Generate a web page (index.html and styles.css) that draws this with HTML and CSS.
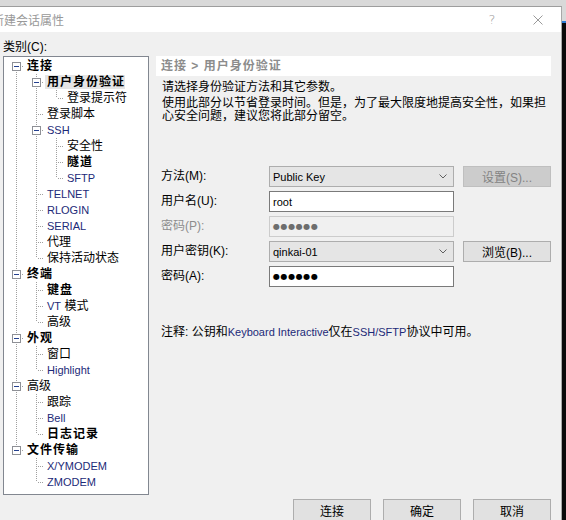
FILE: index.html
```html
<!DOCTYPE html>
<html lang="zh-CN">
<head>
<meta charset="utf-8">
<title>新建会话属性</title>
<link rel="stylesheet" href="styles.css">
</head>
<body>
<div class="screen">
  <div class="topstrip"></div>
  <div class="main">
    <div class="window">
      <div class="titlebar">
        <span class="title">新建会话属性</span>
        <div class="caps">
          <span class="capbtn help">?</span>
          <span class="capbtn">
            <svg width="10" height="10" viewBox="0 0 10 10"><path d="M0.5 0.5L9.5 9.5M9.5 0.5L0.5 9.5" stroke="#9a9a9a" stroke-width="1" fill="none"/></svg>
          </span>
        </div>
      </div>
      <div class="body">
        <div class="cat-label">类别(C):</div>
        <div class="tree">
          <div class="row"><i class="c f"><b class="tg"></b></i><span class="lbl b">连接</span></div>
          <div class="row"><i class="c v"></i><i class="c t"><b class="tg"></b></i><span class="lbl b sel">用户身份验证</span></div>
          <div class="row"><i class="c v"></i><i class="c v"></i><i class="c l"></i><span class="lbl">登录提示符</span></div>
          <div class="row"><i class="c v"></i><i class="c t"></i><span class="lbl">登录脚本</span></div>
          <div class="row"><i class="c v"></i><i class="c t"><b class="tg"></b></i><span class="lbl en">SSH</span></div>
          <div class="row"><i class="c v"></i><i class="c v"></i><i class="c t"></i><span class="lbl">安全性</span></div>
          <div class="row"><i class="c v"></i><i class="c v"></i><i class="c t"></i><span class="lbl b">隧道</span></div>
          <div class="row"><i class="c v"></i><i class="c v"></i><i class="c l"></i><span class="lbl en">SFTP</span></div>
          <div class="row"><i class="c v"></i><i class="c t"></i><span class="lbl en">TELNET</span></div>
          <div class="row"><i class="c v"></i><i class="c t"></i><span class="lbl en">RLOGIN</span></div>
          <div class="row"><i class="c v"></i><i class="c t"></i><span class="lbl en">SERIAL</span></div>
          <div class="row"><i class="c v"></i><i class="c t"></i><span class="lbl">代理</span></div>
          <div class="row"><i class="c v"></i><i class="c l"></i><span class="lbl">保持活动状态</span></div>
          <div class="row"><i class="c t"><b class="tg"></b></i><span class="lbl b">终端</span></div>
          <div class="row"><i class="c v"></i><i class="c t"></i><span class="lbl b">键盘</span></div>
          <div class="row"><i class="c v"></i><i class="c t"></i><span class="lbl"><span class="en">VT</span> 模式</span></div>
          <div class="row"><i class="c v"></i><i class="c l"></i><span class="lbl">高级</span></div>
          <div class="row"><i class="c t"><b class="tg"></b></i><span class="lbl b">外观</span></div>
          <div class="row"><i class="c v"></i><i class="c t"></i><span class="lbl">窗口</span></div>
          <div class="row"><i class="c v"></i><i class="c l"></i><span class="lbl en">Highlight</span></div>
          <div class="row"><i class="c t"><b class="tg"></b></i><span class="lbl">高级</span></div>
          <div class="row"><i class="c v"></i><i class="c t"></i><span class="lbl">跟踪</span></div>
          <div class="row"><i class="c v"></i><i class="c t"></i><span class="lbl en">Bell</span></div>
          <div class="row"><i class="c v"></i><i class="c l"></i><span class="lbl b">日志记录</span></div>
          <div class="row"><i class="c l"><b class="tg"></b></i><span class="lbl b">文件传输</span></div>
          <div class="row"><i class="c n"></i><i class="c t"></i><span class="lbl en">X/YMODEM</span></div>
          <div class="row"><i class="c n"></i><i class="c l"></i><span class="lbl en">ZMODEM</span></div>
        </div>
        <div class="panel">
          <div class="crumb">连接 &gt; 用户身份验证</div>
          <div class="intro">请选择身份验证方法和其它参数。</div>
          <div class="intro2">使用此部分以节省登录时间。但是，为了最大限度地提高安全性，如果担<br>心安全问题，建议您将此部分留空。</div>
          <div class="form">
            <div class="flabel">方法(M):</div>
            <div class="field combo"><span class="val">Public Key</span><svg class="arrow" width="8" height="5" viewBox="0 0 8 5"><path d="M0.5 0.5L4 4L7.5 0.5" stroke="#606060" stroke-width="1" fill="none"/></svg></div>
            <div class="fbtn dis">设置(S)...</div>

            <div class="flabel">用户名(U):</div>
            <div class="field"><span class="val">root</span></div>
            <div class="empty"></div>

            <div class="flabel dis">密码(P):</div>
            <div class="field disf"><span class="dots grey">●●●●●●</span></div>
            <div class="empty"></div>

            <div class="flabel">用户密钥(K):</div>
            <div class="field combo"><span class="val">qinkai-01</span><svg class="arrow" width="8" height="5" viewBox="0 0 8 5"><path d="M0.5 0.5L4 4L7.5 0.5" stroke="#606060" stroke-width="1" fill="none"/></svg></div>
            <div class="fbtn">浏览(B)...</div>

            <div class="flabel">密码(A):</div>
            <div class="field"><span class="dots">●●●●●●</span></div>
            <div class="empty"></div>
          </div>
          <div class="note">注释: 公钥和<span class="en">Keyboard Interactive</span>仅在<span class="en">SSH/SFTP</span>协议中可用。</div>
        </div>
        <div class="buttons">
          <div class="pbtn">连接</div>
          <div class="pbtn">确定</div>
          <div class="pbtn">取消</div>
        </div>
      </div>
    </div>
    <div class="desk">
      <div class="desk-top"></div>
      <div class="desk-line"></div>
      <div class="desk-rest"></div>
    </div>
  </div>
</div>
</body>
</html>
```
FILE: styles.css
```css
* { box-sizing: border-box; }
html, body { margin: 0; padding: 0; }
:root {
  --vd: repeating-linear-gradient(to bottom, #a0a0a0 0 1px, transparent 1px 2px);
  --hd: repeating-linear-gradient(to right, #a0a0a0 0 1px, transparent 1px 2px);
}
body {
  width: 566px;
  height: 520px;
  overflow: hidden;
  background: #d9d9d9;
  font-family: "Liberation Sans", "Noto Sans CJK SC", sans-serif;
  font-size: 12px;
  color: #000;
}
.screen { display: flex; flex-direction: column; width: 566px; height: 520px; overflow: hidden; }
.topstrip { height: 6px; flex: none; background: #d9d9d9; }
.main { display: flex; flex: 1; min-height: 0; }
.window {
  width: 562px;
  flex: none;
  display: flex;
  flex-direction: column;
  border-top: 1px solid #9d9d9d;
  border-right: 1px solid #a8a8a8;
  background: #f0f0f0;
  overflow: hidden;
}
.desk { flex: 1; display: flex; flex-direction: column; }
.desk-top { height: 15px; background: #d9d9d9; }
.desk-line { height: 2px; background: #2b7bd6; }
.desk-rest { flex: 1; background: #0a0a0a; }

.titlebar { height: 25px; flex: none; background: #fff; display: flex; align-items: center; }
.title { margin-left: -8px; color: #999; font-family: "Noto Sans CJK SC", sans-serif; font-size: 12px; white-space: nowrap; }
.caps { margin-left: auto; display: flex; }
.capbtn { width: 46px; height: 25px; display: flex; align-items: center; justify-content: center; }
.help { color: #9a9a9a; font-family: "DejaVu Sans", sans-serif; font-size: 13px; font-weight: 200; }

.body {
  flex: 1;
  display: grid;
  grid-template-columns: 146px 395px;
  grid-template-rows: 17px 439px auto;
  column-gap: 7px;
  padding: 7px 10px 0 3px;
}
.cat-label { grid-column: 1; grid-row: 1; line-height: 17px; white-space: nowrap; }

.tree {
  grid-column: 1;
  grid-row: 2;
  background: #fff;
  border: 1px solid #828790;
  padding-top: 1px;
  overflow: hidden;
}
.row { display: flex; height: 16px; align-items: center; white-space: nowrap; }
.c { display: block; width: 20px; height: 16px; flex: none; background-repeat: no-repeat; }
.c.v { background-image: var(--vd); background-position: 12px 0; background-size: 1px 16px; }
.c.t { background-image: var(--vd), var(--hd); background-position: 12px 0, 14px 8px; background-size: 1px 16px, 6px 1px; }
.c.l { background-image: var(--vd), var(--hd); background-position: 12px 0, 14px 8px; background-size: 1px 8px, 6px 1px; }
.c.f { background-image: var(--vd), var(--hd); background-position: 12px 8px, 14px 8px; background-size: 1px 8px, 6px 1px; }
.tg {
  display: block;
  width: 9px;
  height: 9px;
  margin: 4px 0 0 8px;
  border: 1px solid #8e9096;
  background: linear-gradient(#24408f, #24408f) center / 5px 1px no-repeat, #fff;
}
.lbl { margin-left: 3px; line-height: 16px; }
.b { font-weight: bold; letter-spacing: 1px; }
.sel { background: #e5e5e5; padding: 0 0 0 2px; margin-left: 1px; line-height: 14px; }
.en { font-size: 11px; color: #1c2a78; letter-spacing: 0; }

.panel { grid-column: 2; grid-row: 2; }
.crumb {
  height: 20px;
  background: #fff;
  padding-left: 5px;
  line-height: 20px;
  font-weight: bold;
  color: #8c8c8c;
  letter-spacing: 1px;
  white-space: nowrap;
}
.intro { margin: 5px 0 0 6px; line-height: 12px; white-space: nowrap; }
.intro2 { margin: 4px 0 0 6px; line-height: 13px; white-space: nowrap; }

.form {
  display: grid;
  grid-template-columns: 108px 185px 97px;
  grid-auto-rows: 21px;
  row-gap: 4px;
  margin-top: 43px;
  padding-left: 5px;
}
.form .fbtn, .form .empty { margin-left: 9px; }
.flabel { line-height: 21px; white-space: nowrap; }
.flabel.dis { color: #8d8d8d; }
.field {
  display: flex;
  align-items: center;
  padding-left: 3px;
  border: 1px solid #7a7a7a;
  background: #fff;
}
.field.combo { background: #e5e5e5; border-color: #adadad; justify-content: space-between; padding-right: 6px; }
.field.disf { background: #f0f0f0; border-color: #cccccc; }
.val { font-size: 11px; }
.arrow { display: block; }
.dots { font-family: "DejaVu Sans", sans-serif; font-size: 8px; letter-spacing: 0.6px; color: #000; }
.dots.grey { color: #6d6d6d; }
.fbtn {
  display: flex;
  align-items: center;
  justify-content: center;
  border: 1px solid #adadad;
  background: #e1e1e1;
  white-space: nowrap;
}
.fbtn.dis { background: #cccccc; border-color: #bfbfbf; color: #838383; }

.note { margin: 37px 0 0 5px; line-height: 16px; white-space: nowrap; }

.buttons {
  grid-column: 1 / 3;
  grid-row: 3;
  display: flex;
  justify-content: flex-end;
  gap: 12px;
  margin-top: 4px;
}
.pbtn {
  width: 78px;
  height: 23px;
  border: 1px solid #adadad;
  background: #e1e1e1;
  display: flex;
  align-items: center;
  justify-content: center;
}
```
